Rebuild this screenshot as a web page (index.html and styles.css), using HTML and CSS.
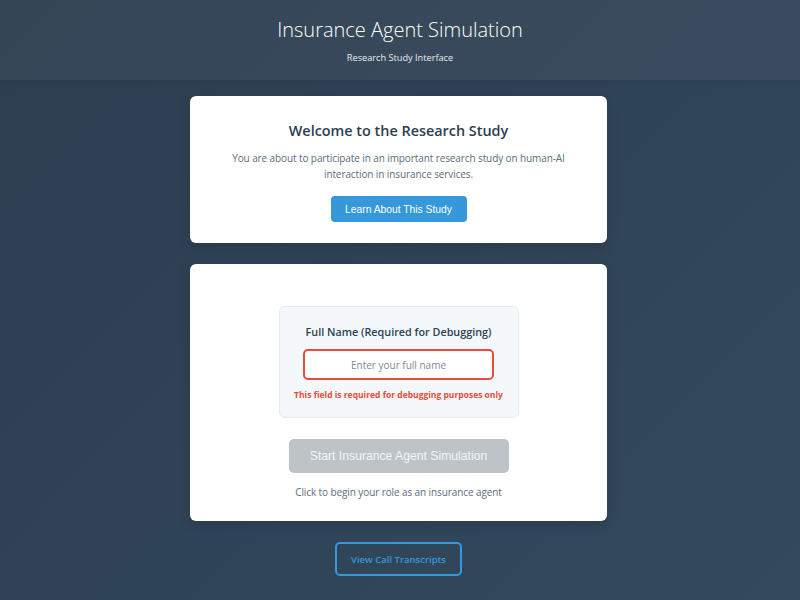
FILE: index.html
```html
<!DOCTYPE html>
<html lang="en">
<head>
<meta charset="utf-8">
<title>Insurance Agent Simulation</title>
<link rel="stylesheet" href="styles.css">
</head>
<body>
<header class="site-header">
  <h1 class="site-title">Insurance Agent Simulation</h1>
  <p class="site-subtitle">Research Study Interface</p>
</header>
<main class="main">
  <section class="card welcome">
    <h2 class="welcome-title">Welcome to the Research Study</h2>
    <p class="welcome-text">You are about to participate in an important research study on human-AI interaction in insurance services.</p>
    <button class="btn-primary" type="button">Learn About This Study</button>
  </section>
  <section class="card start">
    <div class="name-box">
      <label class="name-label" for="fullname">Full Name (Required for Debugging)</label>
      <input class="name-input" id="fullname" type="text" placeholder="Enter your full name">
      <p class="name-error">This field is required for debugging purposes only</p>
    </div>
    <button class="btn-start" type="button" disabled>Start Insurance Agent Simulation</button>
    <p class="start-hint">Click to begin your role as an insurance agent</p>
  </section>
  <button class="btn-outline" type="button">View Call Transcripts</button>
</main>
</body>
</html>
```
FILE: styles.css
```css
* { box-sizing: border-box; }
html, body { height: 100%; }
body {
  margin: 0;
  font-family: "Open Sans", "Noto Sans", sans-serif;
  background: linear-gradient(135deg, #2c3e50 0%, #34495e 100%);
  color: #2c3e50;
  min-height: 600px;
}
.site-header {
  height: 80px;
  background: rgba(255,255,255,0.04);
  box-shadow: 0 2px 8px rgba(0,0,0,0.08);
  text-align: center;
  color: #fff;
  padding-top: 15px;
}
.site-title {
  margin: 0;
  font-weight: 300;
  font-size: 20px;
  line-height: 30px;
}
.site-subtitle {
  margin: 6px 0 0;
  font-size: 9.2px;
  line-height: 14px;
  opacity: 0.9;
}
.main {
  display: flex;
  flex-direction: column;
  align-items: center;
  padding-top: 16px;
}
.card {
  width: 417px;
  margin-left: -3px;
  background: #fff;
  border-radius: 6px;
  box-shadow: 0 4px 12px rgba(0,0,0,0.15);
  text-align: center;
}
.welcome {
  height: 147px;
  padding-top: 24px;
}
.welcome-title {
  margin: 0;
  font-size: 14.4px;
  font-weight: 600;
  line-height: 22px;
  color: #2c3e50;
}
.welcome-text {
  margin: 8px auto 0;
  width: 345px;
  font-size: 10px;
  letter-spacing: -0.1px;
  line-height: 16px;
  color: #5d6d7e;
}
.btn-primary {
  margin-top: 14px;
  width: 136px;
  height: 26px;
  border: none;
  border-radius: 4px;
  background: #3498db;
  color: #fff;
  font-family: "Liberation Sans", Arial, sans-serif;
  font-size: 10.3px;
}
.start {
  margin-top: 21px;
  height: 257px;
  padding-top: 42px;
  display: flex;
  flex-direction: column;
  align-items: center;
}
.name-box {
  width: 240px;
  height: 112px;
  background: #f4f8fb;
  border: 1px solid #e4ecf3;
  border-radius: 6px;
  padding-top: 17px;
  display: flex;
  flex-direction: column;
  align-items: center;
}
.name-label {
  font-size: 10.8px;
  font-weight: 600;
  line-height: 16px;
  color: #2c3e50;
}
.name-input {
  margin-top: 9px;
  width: 191px;
  height: 31px;
  border: 2px solid #e74c3c;
  border-radius: 5px;
  background: #fff;
  text-align: center;
  font-family: "Open Sans", sans-serif;
  font-size: 10px;
  outline: none;
}
.name-input::placeholder { color: #7f8a94; }
.name-error {
  margin: 9px 0 0;
  font-size: 8.5px;
  font-weight: 700;
  line-height: 12px;
  color: #e74c3c;
}
.btn-start {
  margin-top: 21px;
  width: 220px;
  height: 34px;
  border: none;
  border-radius: 5px;
  background: #bdc3c7;
  color: #f4f6f7;
  font-family: "Liberation Sans", Arial, sans-serif;
  font-size: 12.2px;
}
.start-hint {
  margin: 11px 0 0;
  font-size: 10px;
  letter-spacing: -0.1px;
  line-height: 16px;
  color: #5d6d7e;
}
.btn-outline {
  margin-top: 21px;
  margin-left: -3px;
  width: 127px;
  height: 34px;
  background: transparent;
  border: 2px solid #3498db;
  border-radius: 5px;
  color: #3498db;
  font-family: "Open Sans", sans-serif;
  font-weight: 600;
  font-size: 9.5px;
}
```
